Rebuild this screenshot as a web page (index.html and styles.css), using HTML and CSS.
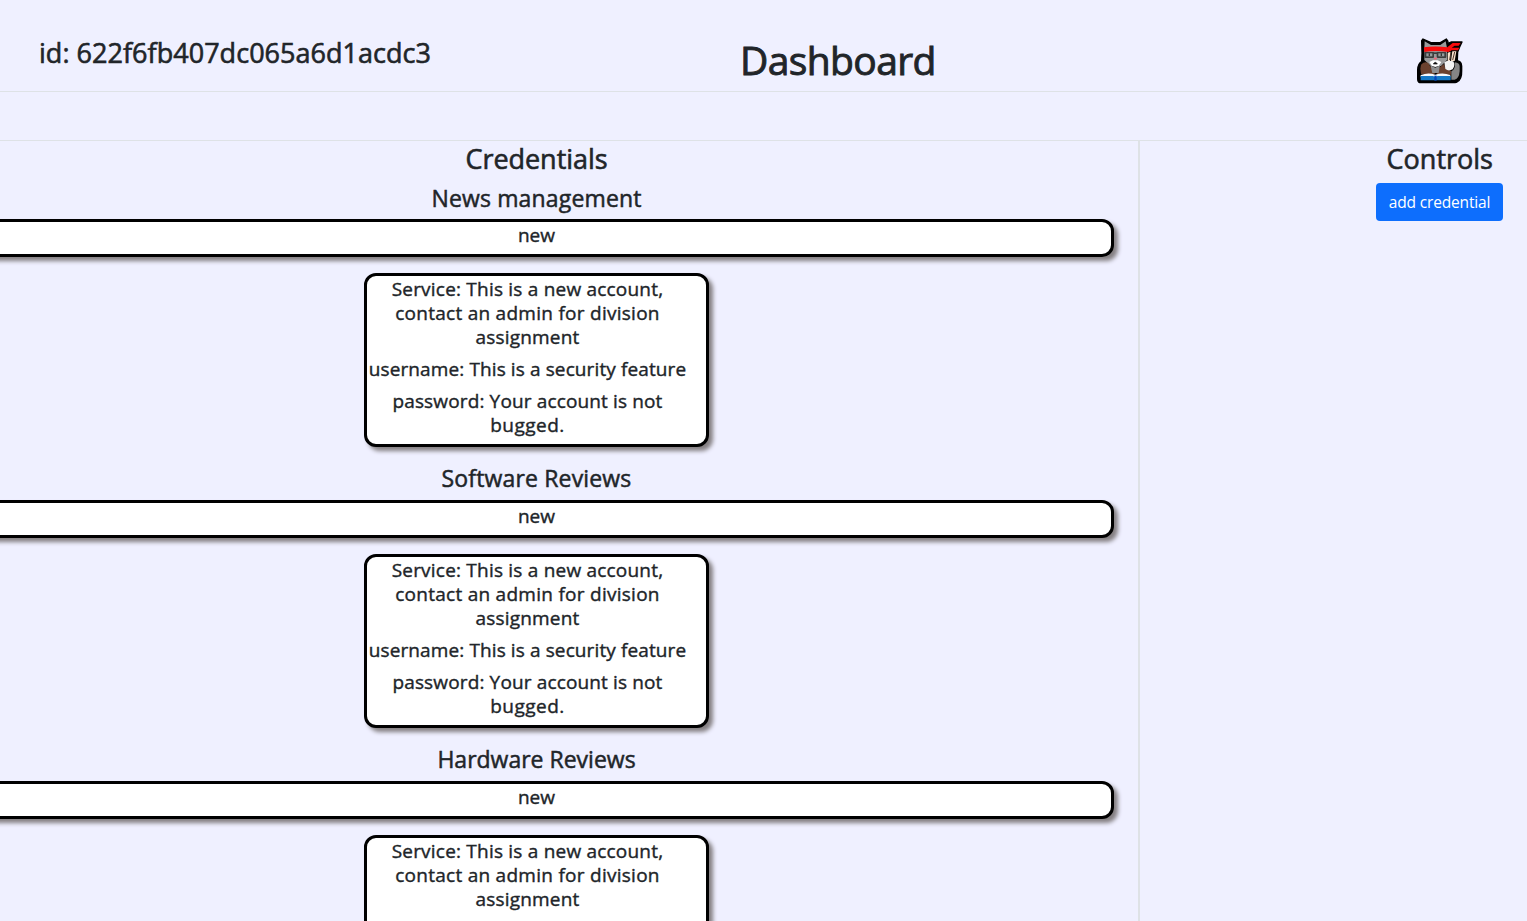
FILE: index.html
```html
<!DOCTYPE html>
<html lang="en">
<head>
<meta charset="utf-8">
<title>Dashboard</title>
<link rel="stylesheet" href="styles.css">
</head>
<body>
<header class="header">
  <h3 class="user-id">id: 622f6fb407dc065a6d1acdc3</h3>
  <h1 class="title">Dashboard</h1>
  <svg class="avatar" viewBox="30 18 150 150" role="img" aria-label="avatar">
    <path d="M54 27 L78 38 H106 L124 27 Q131 34 129 40 L138 36 H171 L164 51 L158 66 L157 92 Q169 94 170 108 L170 122 Q171 148 156 156 L150 158 H44 Q38 156 38 146 L38 120 Q38 102 50 94 L51 70 L50 32 Z" fill="#000" stroke="#000" stroke-width="4" stroke-linejoin="round"/>
    <path d="M58 54 L59 34 L78 45 H106 L122 34 L126 54 V90 L108 108 H78 L58 90 Z" fill="#9a9a9a"/>
    <path d="M57 52 Q90 47 127 52 L143 39 H167 L161 47 H149 L140 53 H163 L159 61 H140 L131 66 Q90 60 58 66 Z" fill="#f90c0c"/>
    <path d="M128 68 L137 65 L135 93 H128 Z M142 64 H154 L149 93 H138 Z" fill="#f8e0cb"/>
    <path d="M138 66 L134 90 M149 66 L143 90" stroke="#4a3328" stroke-width="3"/>
    <path d="M73 96 L84 91 H98 L109 96 L101 108 L91 111 L81 108 Z" fill="#fff"/>
    <rect x="58" y="66" width="29" height="18" rx="3" fill="#3c3e3e"/>
    <rect x="95" y="66" width="29" height="18" rx="3" fill="#3c3e3e"/>
    <path d="M82 67 H99 V72 H82 Z" fill="#3c3e3e"/>
    <rect x="64" y="70" width="18" height="9" fill="#969c9c"/>
    <rect x="100" y="70" width="18" height="9" fill="#969c9c"/>
    <path d="M71 70 H75 V78 H71 Z M107 70 H111 V78 H107 Z" fill="#333"/>
    <path d="M86 83 H97 L91 90 Z" fill="#ff5b75"/>
    <path d="M85 102 Q91 92 97 102 Z" fill="#111" stroke="#111" stroke-width="2"/>
    <path d="M48 104 Q60 92 70 100 L84 122 L90 132 H48 L46 116 Z M104 112 L117 102 L122 118 L138 122 L139 134 H94 Z" fill="#6b412e"/>
    <path d="M76 106 L91 113 L105 106 L101 129 H82 Z" fill="#8f8f8f"/>
    <path d="M149 97 Q164 99 164 109 V124 Q162 146 149 149 H139 V124 Q152 119 149 97 Z" fill="#858585"/>
    <path d="M118 97 Q129 90 145 94 Q152 105 143 118 Q131 125 121 117 Z" fill="#f4f4f4"/>
    <path d="M47 135 Q70 126 91 134 Q113 126 136 135 V142 H47 Z" fill="#f7f9fb"/>
    <path d="M47 138 L84 138 L91 141 L98 138 L137 138 V151 H47 Z" fill="#1678c5"/>
    <path d="M88 137 H95 V152 H88 Z" fill="#0549bb"/>
  </svg>
</header>
<div class="subbar"></div>
<main class="content">
  <section class="credentials">
    <h3 class="heading">Credentials</h3>
    <section class="division">
      <h4 class="name n1">News management</h4>
      <div class="box bar"><span>new</span></div>
      <div class="box card">
        <h5><span class="l1">Service: This is a new account,</span><br><span class="l2">contact an admin for division</span><br><span class="l3">assignment</span></h5>
        <h5><span class="l4">username: This is a security feature</span></h5>
        <h5><span class="l5">password: Your account is not</span><br><span class="l6">bugged.</span></h5>
      </div>
    </section>
    <section class="division">
      <h4 class="name n2">Software Reviews</h4>
      <div class="box bar"><span>new</span></div>
      <div class="box card">
        <h5><span class="l1">Service: This is a new account,</span><br><span class="l2">contact an admin for division</span><br><span class="l3">assignment</span></h5>
        <h5><span class="l4">username: This is a security feature</span></h5>
        <h5><span class="l5">password: Your account is not</span><br><span class="l6">bugged.</span></h5>
      </div>
    </section>
    <section class="division">
      <h4 class="name n3">Hardware Reviews</h4>
      <div class="box bar"><span>new</span></div>
      <div class="box card">
        <h5><span class="l1">Service: This is a new account,</span><br><span class="l2">contact an admin for division</span><br><span class="l3">assignment</span></h5>
      </div>
    </section>
  </section>
  <aside class="controls">
    <h3 class="heading heading-controls">Controls</h3>
    <button class="add">add credential</button>
  </aside>
</main>
</body>
</html>
```
FILE: styles.css
```css
* { box-sizing: border-box; }
html, body { height: 100%; overflow: hidden; }
body {
  margin: 0;
  display: flex;
  flex-direction: column;
  background: #eff0ff;
  color: #212529;
  font-family: "Open Sans", "Noto Sans", sans-serif;
}
h1, h3, h4, h5 { margin: 0; font-weight: 500; white-space: nowrap; }
h1, h3, h4, h5, .bar { -webkit-text-stroke: 0.4px #212529; }
.header {
  flex: none;
  height: 92px;
  display: grid;
  grid-template-columns: 740px 675px 50px;
  align-items: start;
  border-bottom: 1px solid #dee2e6;
}
.user-id { padding: 36px 0 0 39px; font-size: 27px; line-height: 34px; letter-spacing: 0.03px; }
.title { padding-top: 36px; font-size: 39px; line-height: 48px; letter-spacing: -0.6px; -webkit-text-stroke-width: 0.9px; }
.user-id, .heading { -webkit-text-stroke-width: 0.6px; }
.avatar { width: 50px; height: 50px; margin-top: 36px; }
.subbar { flex: none; height: 49px; border-bottom: 1px solid #dee2e6; }
.content { flex: 1; min-height: 0; display: flex; }
.credentials {
  width: 1140px;
  padding-right: 65px;
  border-right: 2px solid #dee2e6;
  display: flex;
  flex-direction: column;
  align-items: center;
  overflow: hidden;
}
.heading { height: 42px; font-size: 27px; line-height: 36px; letter-spacing: -0.05px; flex: none; }
.division {
  flex: none;
  width: 1155px;
  margin: 0 -42px;
  height: 281px;
  display: flex;
  flex-direction: column;
  align-items: center;
}
.name { height: 36px; font-size: 23px; line-height: 29px; -webkit-text-stroke-width: 0.5px; }
.n1, .n2 { letter-spacing: 0.15px; }
.n1 { line-height: 31px; }
.box {
  background: #fff;
  border: 3px solid #000;
  border-radius: 12px;
  box-shadow: 4px 4px 4px #847f82;
}
.bar { width: 100%; height: 38px; text-align: center; font-size: 19px; line-height: 26px; }
.card {
  width: 345px;
  height: 174px;
  margin-top: 16px;
  padding: 1px 18px 0 0;
  display: flex;
  flex-direction: column;
  gap: 8px;
  align-items: center;
  text-align: center;
  font-size: 19px;
  line-height: 24px;
}
.card h5 { font-size: inherit; }
.l1 { letter-spacing: 0.21px; }
.l2 { letter-spacing: 0.27px; }
.l3 { letter-spacing: 0.2px; }
.l4 { letter-spacing: 0.11px; }
.l5 { letter-spacing: 0.14px; }
.l6 { letter-spacing: 0.5px; }
.controls {
  flex: 1;
  padding-right: 24px;
  display: flex;
  flex-direction: column;
  align-items: flex-end;
}
.heading-controls { padding-right: 10px; letter-spacing: 0; }
.add {
  width: 127px;
  height: 38px;
  padding: 0;
  border: 0;
  border-radius: 4px;
  background: #0d6efd;
  color: #fff;
  font: 400 15.5px/38px "Open Sans", sans-serif;
  letter-spacing: -0.15px;
}
```
